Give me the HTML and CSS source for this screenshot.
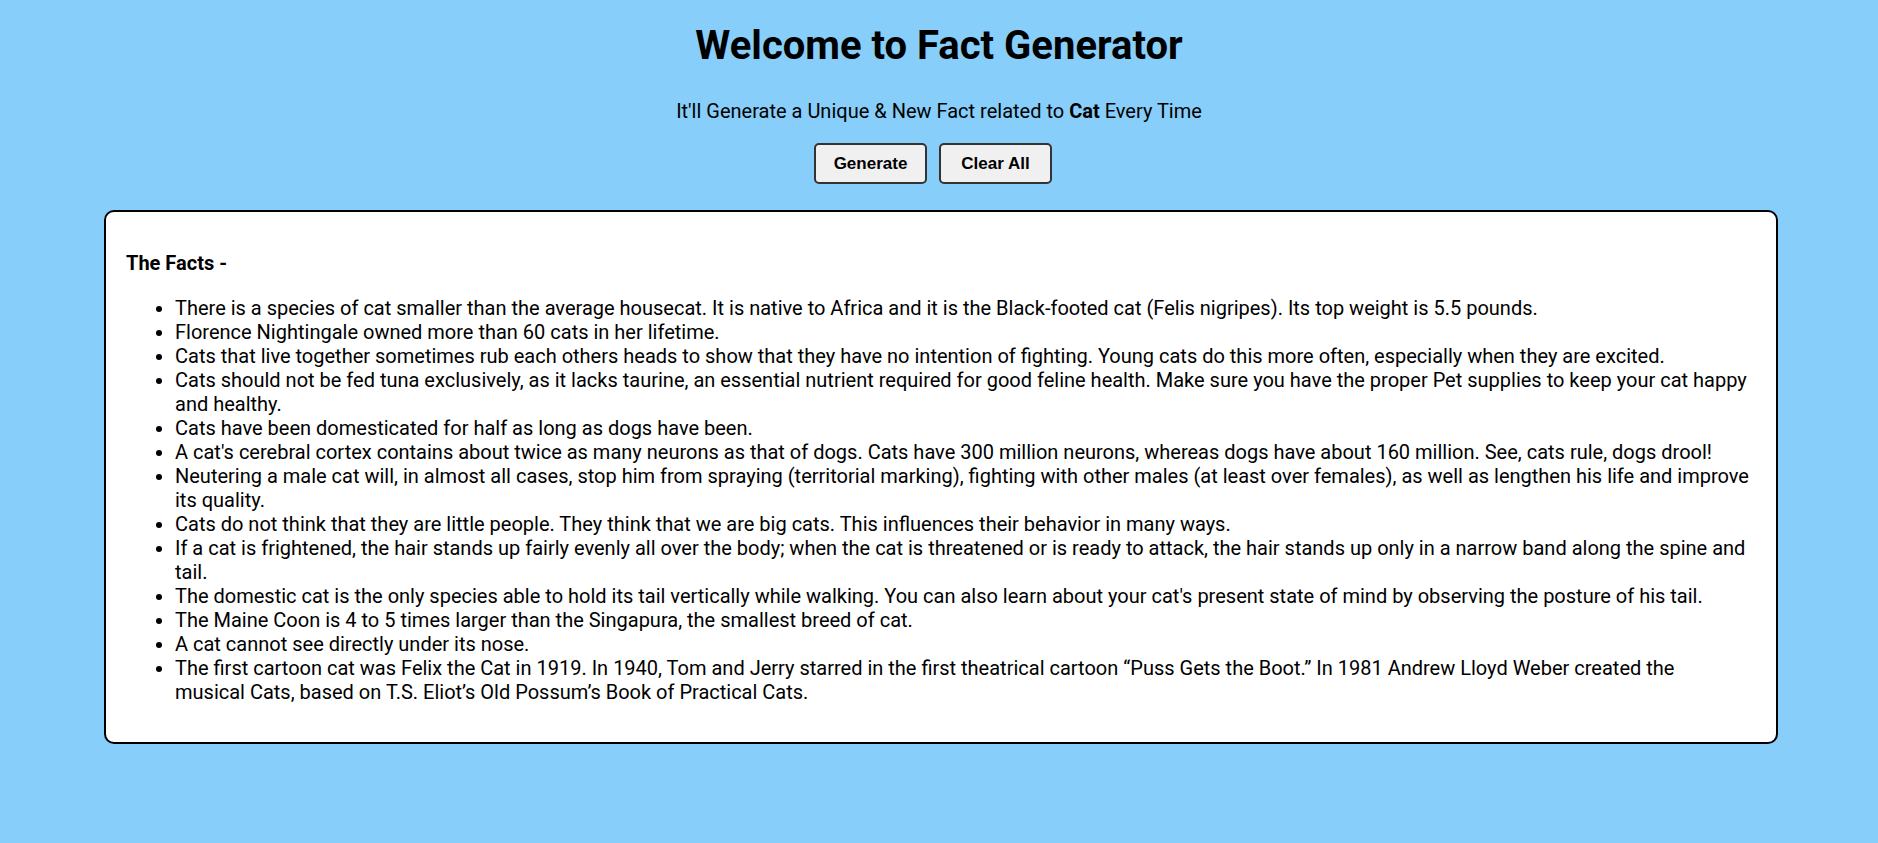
FILE: index.html
```html
<!DOCTYPE html>
<html lang="en">
<head>
<meta charset="utf-8">
<title>Fact Generator</title>
<link rel="stylesheet" href="styles.css">
</head>
<body>
<header class="header">
  <h1 class="title">Welcome to Fact Generator</h1>
  <p class="subtitle">It'll Generate a Unique &amp; New Fact related to <b>Cat</b> Every Time</p>
  <div class="actions">
    <button class="btn" type="button">Generate</button>
    <button class="btn" type="button">Clear All</button>
  </div>
</header>
<main class="facts">
  <h3 class="facts-title">The Facts -</h3>
  <ul class="facts-list">
    <li>There is a species of cat smaller than the average housecat. It is native to Africa and it is the Black-footed cat (Felis nigripes). Its top weight is 5.5 pounds.</li>
    <li>Florence Nightingale owned more than 60 cats in her lifetime.</li>
    <li>Cats that live together sometimes rub each others heads to show that they have no intention of fighting. Young cats do this more often, especially when they are excited.</li>
    <li>Cats should not be fed tuna exclusively, as it lacks taurine, an essential nutrient required for good feline health. Make sure you have the proper Pet supplies to keep your cat happy and healthy.</li>
    <li>Cats have been domesticated for half as long as dogs have been.</li>
    <li>A cat's cerebral cortex contains about twice as many neurons as that of dogs. Cats have 300 million neurons, whereas dogs have about 160 million. See, cats rule, dogs drool!</li>
    <li>Neutering a male cat will, in almost all cases, stop him from spraying (territorial marking), fighting with other males (at least over females), as well as lengthen his life and improve its quality.</li>
    <li>Cats do not think that they are little people. They think that we are big cats. This influences their behavior in many ways.</li>
    <li>If a cat is frightened, the hair stands up fairly evenly all over the body; when the cat is threatened or is ready to attack, the hair stands up only in a narrow band along the spine and tail.</li>
    <li>The domestic cat is the only species able to hold its tail vertically while walking. You can also learn about your cat's present state of mind by observing the posture of his tail.</li>
    <li>The Maine Coon is 4 to 5 times larger than the Singapura, the smallest breed of cat.</li>
    <li>A cat cannot see directly under its nose.</li>
    <li>The first cartoon cat was Felix the Cat in 1919. In 1940, Tom and Jerry starred in the first theatrical cartoon “Puss Gets the Boot.” In 1981 Andrew Lloyd Weber created the musical Cats, based on T.S. Eliot’s Old Possum’s Book of Practical Cats.</li>
  </ul>
</main>
</body>
</html>
```

FILE: styles.css
```css
* { box-sizing: border-box; }

body {
  margin: 0;
  background: #87cefa;
  font-family: Roboto, "Liberation Sans", sans-serif;
  color: #000;
}

.header {
  text-align: center;
  padding-top: 22px;
}

.title {
  margin: 0;
  font-size: 40px;
  font-weight: 700;
  line-height: 48px;
}

.subtitle {
  margin: 30px 0 0;
  font-size: 20px;
  line-height: 22px;
}

.subtitle b { font-weight: 700; }

.actions {
  display: flex;
  justify-content: center;
  gap: 12px;
  margin-top: 21px;
  padding-right: 12px;
}

.btn {
  width: 113px;
  height: 41px;
  background: #f0f0f0;
  border: 2px solid #333;
  border-radius: 5px;
  font-family: "Liberation Sans", Arial, sans-serif;
  font-size: 17px;
  font-weight: 700;
  color: #000;
  padding: 0;
}

.facts {
  width: 1674px;
  margin: 26px auto 0;
  position: relative;
  left: 2px;
  background: #fff;
  border: 2px solid #000;
  border-radius: 10px;
  padding: 40px 27px 38px 20px;
}

.facts-title {
  margin: 0;
  font-size: 20px;
  line-height: 22px;
  font-weight: 700;
}

.facts-list {
  margin: 22px 0 0;
  padding-left: 49px;
  font-size: 20px;
  line-height: 24px;
}
```
